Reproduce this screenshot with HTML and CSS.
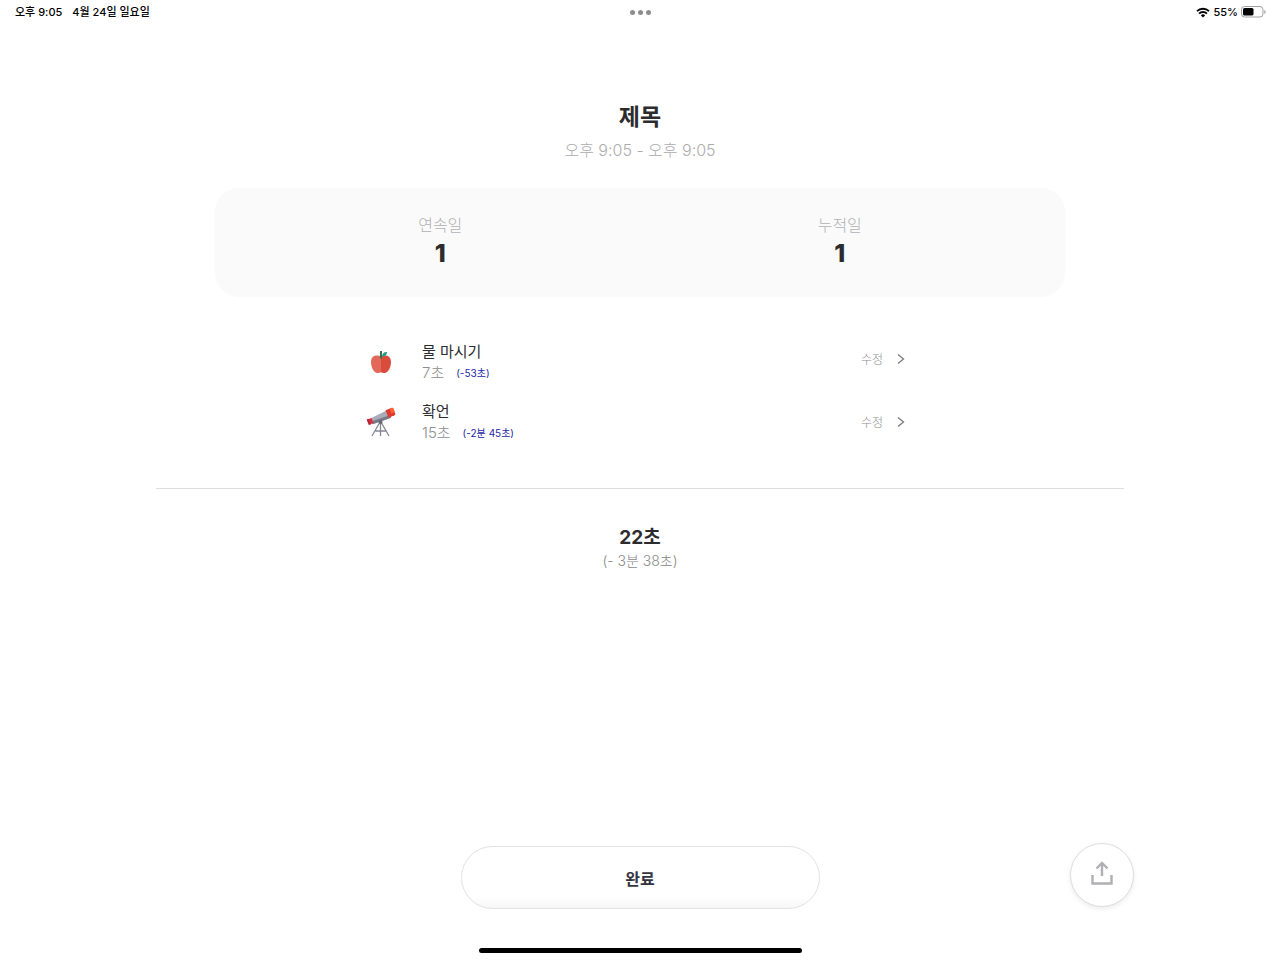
FILE: index.html
```html
<!DOCTYPE html>
<html lang="ko">
<head>
<meta charset="utf-8">
<meta name="viewport" content="width=device-width, initial-scale=1">
<title>제목</title>
<link rel="stylesheet" href="styles.css">
</head>
<body>
<header class="status">
  <div class="status-left"><span>오후 9:05</span><span>4월 24일 일요일</span></div>
  <div class="dots"><i></i><i></i><i></i></div>
  <div class="status-right">
    <svg width="14" height="11" viewBox="0 0 14 11" fill="none" stroke="#000" stroke-width="1.9"><path d="M1 4.2a8.5 8.5 0 0 1 12 0"/><path d="M3.1 6.6a5.4 5.4 0 0 1 7.8 0"/><path d="M7 10.6 4.9 8.4a3 3 0 0 1 4.2 0z" fill="#000" stroke="none"/></svg>
    <span>55%</span>
    <svg width="25" height="12" viewBox="0 0 25 12"><rect x=".5" y=".5" width="21.500" height="10.500" rx="3" fill="none" stroke="#a0a0a0"/><rect x="2" y="2" width="10.500" height="7.500" rx="1.500"/><path d="M23.300 4v4q1.400-.7 1.400-2t-1.400-2z" fill="#a0a0a0"/></svg>
  </div>
</header>
<main class="page">
  <h1 class="title">제목</h1>
  <p class="period">오후 9:05 - 오후 9:05</p>
  <dl class="card">
    <div class="stat"><dt>연속일</dt><dd>1</dd></div>
    <div class="stat"><dt>누적일</dt><dd>1</dd></div>
  </dl>
  <section class="tasks">
    <ul class="task-list">
      <li class="task">
        <svg class="emoji" viewBox="0 0 30 30"><path d="M15 9.800C12 7.500 5 7.500 5 15c0 5.500 3 11 6.500 11 1.600 0 2-.6 3.500-.6z" fill="#e2695a"/><path d="M15 9.800c3-2.300 10-2.300 10 5.200 0 5.500-3 11-6.500 11-1.600 0-2-.6-3.500-.6z" fill="#d94c3c"/><path d="M14 4h2v7.500h-2z" fill="#3f6b4f"/><path d="M16 9.500c0-3 2-4.800 5-4.500 0 3-2 4.800-5 4.500z" fill="#1fa087"/></svg>
        <div><h2 class="name">물 마시기</h2><p class="time">7초<span class="diff">(-53초)</span></p></div>
      </li>
      <li class="task">
        <svg class="emoji" viewBox="0 0 30 30"><g fill="none" stroke="#858793" stroke-width="1.300"><path d="M14.500 14v15M14 15 6 29M15 15l8 14M9.500 24h10.500"/></g><path d="m4.500 11.500 17-8.500 3.600 7.700-18.500 6.500z" fill="#a9abb8"/><path d="m5.500 14.500 18.500-6.500 1.100 2.700L6.600 17.200z" fill="#777987"/><path d="m19.500 3.200 6.500-2.500q1 0 1.500 1l1.800 5q.2 1-.8 1.500l-6 2.500z" fill="#e03a30"/><path d="m23.500 1.700 2.500-1q1 0 1.500 1l1.300 3.500-3.500 1.400z" fill="#ff6038"/><path d="m2 12.200 3.500-1.300 2 4.900-3.400 1.800z" fill="#d92f3e"/><path d="m.6 12.500 2-.7 2.200 5.600-2 .7z" fill="#b72435"/><circle cx="14.500" cy="15" r="2" fill="#666875"/></svg>
        <div><h2 class="name">확언</h2><p class="time">15초<span class="diff">(-2분 45초)</span></p></div>
      </li>
    </ul>
    <div class="edits">
      <button class="edit" type="button" aria-label="물 마시기 수정">수정<svg width="8" height="12" viewBox="0 0 8 12"><path d="m1 1.500 5.500 4.500L1 10.500"/></svg></button>
      <button class="edit" type="button" aria-label="확언 수정">수정<svg width="8" height="12" viewBox="0 0 8 12"><path d="m1 1.500 5.500 4.500L1 10.500"/></svg></button>
    </div>
  </section>
  <hr class="rule">
  <p class="total">22초</p>
  <p class="total-diff">(- 3분 38초)</p>
</main>
<footer class="actions">
  <span></span>
  <button class="done" type="button">완료</button>
  <button class="share" type="button" aria-label="공유"><svg width="22" height="24" viewBox="0 0 22 24"><path d="M1.500 14v8.500h19V14M11 15V2.500M5.500 7.500 11 2l5.500 5.500"/></svg></button>
</footer>
<div class="home"></div>
</body>
</html>
```

FILE: styles.css
```css
* { box-sizing: border-box; margin: 0; padding: 0; }
body {
  min-height: 100vh;
  display: flex;
  flex-direction: column;
  background: #fff;
  color: #2c2c2e;
  font-family: Inter, "Noto Sans CJK KR", sans-serif;
}
button { font: inherit; background: none; border: 0; cursor: pointer; }
svg { display: block; }

.status {
  display: grid;
  grid-template-columns: 1fr auto 1fr;
  align-items: center;
  height: 24px;
  padding: 0 14px 0 15px;
  font-size: 11px;
  font-weight: 500;
  line-height: 16px;
  color: #000;
}
.status-left { display: flex; gap: 10px; }
.status-right { display: flex; gap: 3px; align-items: center; justify-content: flex-end; }
.dots { display: flex; gap: 3px; }
.dots i { width: 5px; height: 5px; border-radius: 50%; background: #8e8e90; }

.page {
  flex: 1;
  display: flex;
  flex-direction: column;
  align-items: center;
  padding: 77px 24px 0;
}
.title { font-size: 23px; font-weight: 700; line-height: 32px; }
.period { margin-top: 7px; font-size: 16px; font-weight: 300; line-height: 20px; color: #acacae; }
.card {
  display: flex;
  justify-content: center;
  width: 100%;
  max-width: 850px;
  margin-top: 28px;
  padding: 26px 0 27px;
  border-radius: 24px;
  background: #fafafa;
  text-align: center;
}
.stat { width: 47%; }
.stat dt { font-size: 16px; font-weight: 300; line-height: 22px; color: #b1b1b3; }
.stat dd { font-size: 25px; font-weight: 800; line-height: 34px; }

.tasks {
  display: flex;
  justify-content: space-between;
  width: 100%;
  max-width: 548px;
  margin-top: 44px;
  padding-right: 9px;
}
.task-list { list-style: none; }
.task { display: flex; align-items: center; gap: 26px; height: 60px; padding-bottom: 18px; }
.emoji { width: 30px; height: 30px; }
.name { font-size: 15px; font-weight: 400; line-height: 22px; }
.time { display: flex; align-items: center; gap: 12px; font-size: 15px; font-weight: 300; line-height: 20px; color: #8e8e90; }
.diff { font-size: 10px; font-weight: 400; color: #1d27a6; }
.edit {
  display: flex;
  align-items: center;
  gap: 14px;
  height: 63px;
  padding-bottom: 28px;
  font-size: 12px;
  font-weight: 300;
  color: #8e8e90;
}
.edit svg { fill: none; stroke: #808082; stroke-width: 1.400; }
.rule { width: 968px; max-width: 100%; height: 1px; margin-top: 21px; border: 0; background: #dededf; }
.total { margin-top: 36px; font-size: 19px; font-weight: 700; line-height: 26px; }
.total-diff { font-size: 14px; font-weight: 300; line-height: 20px; color: #88888a; }

.actions {
  display: grid;
  grid-template-columns: 1fr minmax(0, 359px) 1fr;
  align-items: end;
  width: 100%;
  padding: 0 146px 39px;
}
.done {
  height: 63px;
  border: 1px solid #e2e2e4;
  border-radius: 32px;
  background: linear-gradient(#fff 80%, #f7f7f7);
  font-size: 16px;
  font-weight: 600;
  color: #34343f;
}
.share {
  display: flex;
  align-items: center;
  justify-content: center;
  justify-self: end;
  width: 64px;
  height: 64px;
  margin-bottom: 2px;
  padding-bottom: 4px;
  border: 1px solid #dededf;
  border-radius: 50%;
  background: #fff;
  box-shadow: 0 2px 5px rgba(0, 0, 0, .08);
}
.share svg { fill: none; stroke: #b0b0b4; stroke-width: 2.400; }
.home { width: 323px; height: 5px; margin: 0 auto 7px; border-radius: 3px; background: #000; }
```
